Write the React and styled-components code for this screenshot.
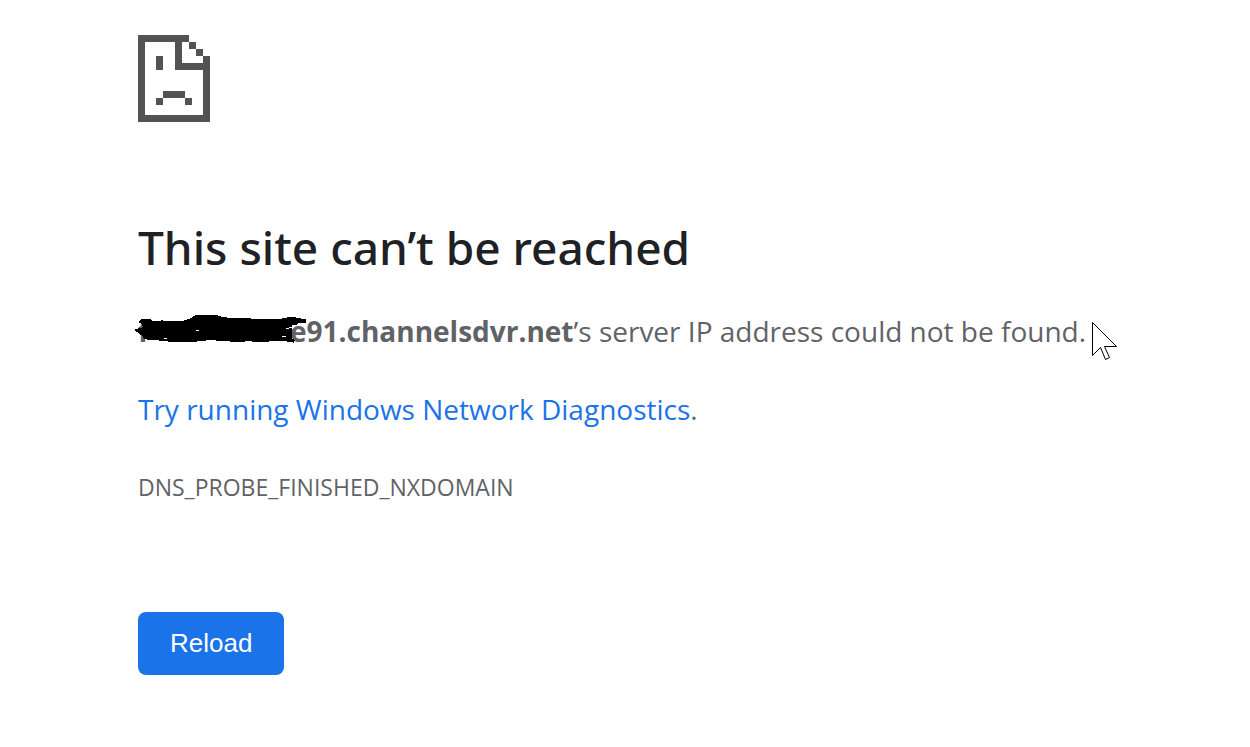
import React from "react";
import styled, {createGlobalStyle} from "styled-components";

const App = () => {
  return (
    <>
      <GlobalStyle/>
      <Page>
        <SadFile/>
        <Title>This site can’t be reached</Title>
        <Summary>
          <Host>
            <Hidden>f<Scribble/></Hidden>e91.channelsdvr.net
          </Host>
          ’s server IP address could not be found.
          <Pointer/>
        </Summary>
        <Suggestion>
          <Link href="#diagnostics">Try running Windows Network Diagnostics</Link>.
        </Suggestion>
        <ErrorCode>DNS_PROBE_FINISHED_NXDOMAIN</ErrorCode>
        <Reload type="button">Reload</Reload>
      </Page>
    </>
  )
};

const SadFile = () => (
  <FileIcon width="72" height="87" viewBox="0 0 72 87" shapeRendering="crispEdges" aria-hidden="true">
    <path d="M0 0H51V7H44V28H65V21H72V87H0ZM7 7V80H65V35H37V7Z" fillRule="evenodd"/>
    <path d="M51 7h7v7h-7zM58 14h7v7h-7zM18 21h7v14h-7zM25 56h22v7h-22zM18 63h7v7h-7zM47 63h7v7h-7z"/>
  </FileIcon>
);

const Scribble = () => (
  <ScribbleMark width="172" height="30" viewBox="0 0 172 30" shapeRendering="crispEdges" aria-hidden="true">
    <path
      d="M4 6L7 4L15 4L17 6L24 6L27 5L29 6L47 6L53 4L57 3L58 1L61 0L68 0L70 -1L71 0L81 0L88 2L95 3L115 3L116 4L143 4L151 3L152 2L160 2L161 3L165 3L166 4L170 4L171 5L171 8L163 8L161 10L157 10L157 24L160 25L159 28L157 27L146 26L122 27L112 26L108 27L82 26L79 25L62 26L61 27L33 27L32 26L27 26L20 25L13 25L8 23L8 21L5 20L4 18L1 17L0 16L0 14L5 13L8 12L7 9L4 8Z"/>
    <path d="M61 15h3M154 12h3M151 13h3M147 21h4M29 23h3" stroke="#fff" strokeWidth="1" transform="translate(0 .5)"/>
  </ScribbleMark>
);

const Pointer = () => (
  <PointerMark width="26" height="40" viewBox="0 0 26 40" aria-hidden="true">
    <path
      d="M1 1V34L9 26L14 38L18 36L13 25H25Z"
      fill="#fff"
      stroke="#000"
      strokeWidth="1"
      transform="translate(-.5 -.5)"/>
  </PointerMark>
);

const GlobalStyle = createGlobalStyle`
  body {
    margin: 0;
    background-color: #fff;
    color: #5f6368;
    font-family: "Open Sans", "Noto Sans", sans-serif;
    font-size: 28px;
    line-height: 46px;
  }
`;
const Page = styled.main`
  box-sizing: border-box;
  max-width: 974px;
  margin: 0 auto;
  padding: 35px 0;
`;
const FileIcon = styled.svg`
  display: block;
  fill: #535353;
`;
const Title = styled.h1`
  margin: 96px 0 32px;
  color: #202124;
  font-family: "Noto Sans", sans-serif;
  font-size: 46px;
  font-weight: 500;
  line-height: 58px;
`;
const Summary = styled.p`
  margin: 0 0 32px;
  white-space: nowrap;
`;
const Host = styled.strong`
  font-weight: 700;
`;
const Hidden = styled.span`
  position: relative;
  display: inline-block;
  width: 152px;
`;
const ScribbleMark = styled.svg`
  position: absolute;
  left: -3px;
  top: 7px;
  fill: #000;
`;
const PointerMark = styled.svg`
  position: absolute;
  margin: 14px 0 0 6px;
`;
const Suggestion = styled.p`
  margin: 0 0 32px;
`;
const Link = styled.a`
  color: #1a73e8;
  text-decoration: none;
`;
const ErrorCode = styled.div`
  font-size: 23px;
`;
const Reload = styled.button`
  display: block;
  margin-top: 102px;
  padding: 0 32px;
  border: 0;
  border-radius: 8px;
  background-color: #1a73e8;
  color: #fff;
  font-family: "Liberation Sans", Arial, sans-serif;
  font-size: 26px;
  line-height: 63px;
  cursor: pointer;
`;
export default App;
